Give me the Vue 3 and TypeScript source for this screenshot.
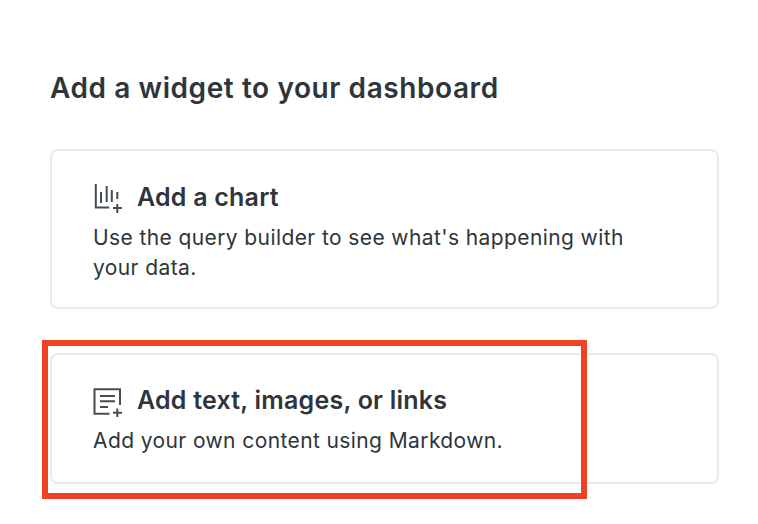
<script setup lang="ts">
const chartBars = ['M95.800 185v23.500h13.500', 'M101 193v11', 'M106.700 187v16', 'M111.800 191v12', 'M117.300 193v7']
</script>

<template>
  <main class="page">
    <h1 class="heading">Add a widget to your dashboard</h1>

    <section class="card card-chart">
      <div class="card-title">
        <svg class="icon" viewBox="93 182 30 32" width="30" height="32" fill="none">
          <path v-for="d in chartBars" :key="d" :d="d" />
          <path d="M113 209h9M117.300 205v9" />
        </svg>
        <h2>Add a chart</h2>
      </div>
      <p>Use the query builder to see what's happening with your data.</p>
    </section>

    <section class="card card-text">
      <div class="card-title">
        <svg class="icon" viewBox="93 384 30 32" width="30" height="32" fill="none" overflow="visible">
          <path d="M120 405v-15.700h-25.500v24.400h15" />
          <path d="M100 396h15M100 401.300h15M100 407h8" />
          <path d="M113 412.700h9M117.300 408.500v8.500" />
        </svg>
        <h2>Add text, images, or links</h2>
      </div>
      <p>Add your own content using Markdown.</p>
      <div class="highlight"></div>
    </section>
  </main>
</template>

<style scoped>
.page {
  box-sizing: border-box;
  width: 758px;
  height: 524px;
  padding: 71px 39px 0 50px;
  overflow: hidden;
  background: #fff;
  color: #2e353b;
  font-family: Inter, "Liberation Sans", sans-serif;
}

.heading {
  margin: 0 0 44px;
  font-size: 28px;
  line-height: 34px;
  font-weight: 600;
  letter-spacing: 0.58px;
}

.card {
  position: relative;
  box-sizing: border-box;
  padding: 30px 41px 0;
  border: 2px solid #ebebeb;
  border-radius: 8px;
}

.card-chart {
  height: 160px;
  margin-bottom: 44px;
}

.card-text {
  height: 131px;
  padding-top: 29px;
}

.card-title {
  display: flex;
  align-items: center;
  gap: 14px;
  height: 32px;
}

.icon {
  flex: none;
  stroke: #454d53;
  stroke-width: 2;
}

h2 {
  margin: 0;
  font-size: 25px;
  line-height: 32px;
  font-weight: 600;
  letter-spacing: 0.22px;
}

p {
  width: 560px;
  margin: 10px 0 0;
  font-size: 21px;
  line-height: 30px;
  letter-spacing: 0.4px;
}

.highlight {
  position: absolute;
  left: -10px;
  top: -15px;
  width: 545px;
  height: 159px;
  box-sizing: border-box;
  border: 6px solid #f04326;
}
</style>
